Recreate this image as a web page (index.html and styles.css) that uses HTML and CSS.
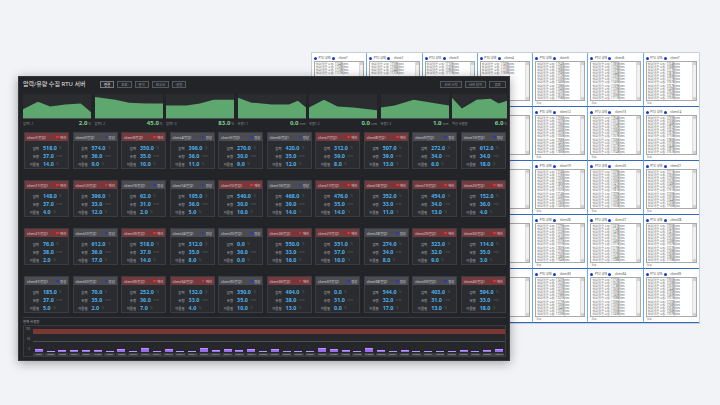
FILE: index.html
```html
<!DOCTYPE html>
<html lang="ko">
<head>
<meta charset="utf-8">
<title>압력/유량 수집 RTU 서버</title>
<link rel="stylesheet" href="styles.css">
</head>
<body>
<div class="desktop" id="desktop"></div>

<div class="app">
  <div class="topbar">
    <div class="title">압력/유량 수집 RTU 서버</div>
    <div class="btns">
      <span class="btn on">연결</span>
      <span class="btn">조회</span>
      <span class="btn">분석</span>
      <span class="btn">보고서</span>
      <span class="btn">설정</span>
    </div>
    <div class="btns right">
      <span class="btn">서버 시작</span>
      <span class="btn">서버 정지</span>
      <span class="btn wide">종료</span>
    </div>
  </div>

  <div class="charts">
    <div class="chart">
      <div class="plot"><svg viewBox="0 0 100 25" preserveAspectRatio="none"><polygon points="0,25 0,16 22,8 40,13 62,11 85,10 100,19 100,25"/></svg></div>
      <div class="clabel"><span class="cname">압력1-1</span><span class="cnum"><b class="cval">2.0</b><i class="cunit">%</i></span></div>
    </div>
    <div class="chart">
      <div class="plot"><svg viewBox="0 0 100 25" preserveAspectRatio="none"><polygon points="0,25 0,3 30,6 50,9 75,10 100,10 100,25"/></svg></div>
      <div class="clabel"><span class="cname">압력1-2</span><span class="cnum"><b class="cval">45.0</b><i class="cunit">%</i></span></div>
    </div>
    <div class="chart">
      <div class="plot"><svg viewBox="0 0 100 25" preserveAspectRatio="none"><polygon points="0,25 0,12 30,12 50,10 70,6 100,6 100,25"/></svg></div>
      <div class="clabel"><span class="cname">압력1-3</span><span class="cnum"><b class="cval">83.0</b><i class="cunit">%</i></span></div>
    </div>
    <div class="chart">
      <div class="plot"><svg viewBox="0 0 100 25" preserveAspectRatio="none"><polygon points="0,25 0,4 20,9 50,11 75,11 88,7 100,14 100,25"/></svg></div>
      <div class="clabel"><span class="cname">유량1-1</span><span class="cnum"><b class="cval">0.0</b><i class="cunit">ccm</i></span></div>
    </div>
    <div class="chart">
      <div class="plot"><svg viewBox="0 0 100 25" preserveAspectRatio="none"><polygon points="0,25 0,14 22,6 42,13 65,14 100,17 100,25"/></svg></div>
      <div class="clabel"><span class="cname">유량1-2</span><span class="cnum"><b class="cval">0.0</b><i class="cunit">ccm</i></span></div>
    </div>
    <div class="chart">
      <div class="plot"><svg viewBox="0 0 100 25" preserveAspectRatio="none"><polygon points="0,25 0,14 20,12 48,6 75,9 100,12 100,25"/></svg></div>
      <div class="clabel"><span class="cname">유량1-3</span><span class="cnum"><b class="cval">1.0</b><i class="cunit">ccm</i></span></div>
    </div>
    <div class="chart">
      <div class="plot"><svg viewBox="0 0 100 25" preserveAspectRatio="none"><polygon points="0,25 0,4 18,15 45,6 70,5 85,10 100,7 100,25"/></svg></div>
      <div class="clabel"><span class="cname">최신 사용량</span><span class="cnum"><b class="cval">6.0</b><i class="cunit">%</i></span></div>
    </div>
  </div>

  <div class="cards" id="cards"></div>

  <div class="usage">
    <div class="ulabel">현재 사용량</div>
    <div class="uchart">
      <div class="yaxis"><span>100</span><span>50</span><span>0</span></div>
      <div class="uplot">
        <div class="band"></div>
        <div class="midline"></div>
        <div class="bars" id="bars"></div>
      </div>
    </div>
  </div>
</div>
<script src="script.js"></script>
</body>
</html>
```

FILE: styles.css
```css
* { box-sizing: border-box; }
html, body { margin: 0; padding: 0; }
body {
  width: 720px;
  height: 405px;
  overflow: hidden;
  position: relative;
  background: #f2f3f6;
  font-family: "Noto Sans", "Noto Sans CJK KR", sans-serif;
}

/* background windows */
.desktop {
  position: absolute;
  left: 311px;
  top: 52px;
  width: 389px;
  height: 272px;
  display: grid;
  grid-template-columns: repeat(7, 1fr);
  grid-template-rows: repeat(5, 1fr);
  background: #ffffff;
  border: 1px solid #c7cfdb;
}
.win {
  display: flex;
  flex-direction: column;
  padding: 2px 2px 0 2px;
  border-right: 1px solid #6aaee8;
  border-bottom: 1px solid #3466bb;
  background: #fff;
  min-width: 0;
  min-height: 0;
}
.win:nth-child(7n) { border-right: none; }
/* windows lying fully under the server panel: their text cannot be seen */
.win.under .win-head,
.win.under .lines,
.win.under .win-foot { visibility: hidden; }
.win-head {
  height: 6px;
  display: flex;
  align-items: center;
  gap: 1.5px;
  font-size: 3px;
  line-height: 4px;
  color: #444;
  white-space: nowrap;
}
.win-head .name { margin-left: 2px; }
.wdot {
  width: 3px;
  height: 3px;
  border-radius: 50%;
  background: #1438d6;
  flex: none;
}
.listbox {
  flex: 1;
  display: flex;
  border: 1px solid #a8a8a8;
  min-height: 0;
  overflow: hidden;
}
.lines {
  flex: 1;
  padding: 0.5px 1px;
  font-size: 2.8px;
  line-height: 3.15px;
  color: #555;
  overflow: hidden;
  white-space: nowrap;
}
.scroll {
  width: 4px;
  background: #f1f1f1;
  border-left: 1px solid #dcdcdc;
  display: flex;
  flex-direction: column;
  justify-content: space-between;
}
.scroll i {
  display: block;
  height: 3px;
  background: #d2d2d2;
}
.win-foot {
  height: 5px;
  font-size: 2.8px;
  line-height: 5px;
  color: #888;
  padding-left: 1px;
}

/* dark app */
.app {
  position: absolute;
  left: 18px;
  top: 76px;
  width: 492px;
  height: 285px;
  background: #232428;
  border: 1px solid #36383c;
  padding: 3px 3px 3px 4px;
  display: flex;
  flex-direction: column;
  box-shadow: 0 2px 10px rgba(0, 0, 0, 0.35);
}
.topbar {
  height: 8px;
  display: flex;
  align-items: center;
}
.title {
  font-size: 6px;
  line-height: 8px;
  color: #e6e6e6;
  width: 77px;
  white-space: nowrap;
}
.btns {
  display: flex;
  gap: 3px;
}
.btns.right { margin-left: auto; }
.btn {
  height: 7px;
  padding: 0 3px;
  min-width: 14px;
  border: 1px solid #55585e;
  background: #27292c;
  color: #9a9da2;
  font-size: 3.4px;
  line-height: 5px;
  text-align: center;
  white-space: nowrap;
}
.btn.on { color: #ffffff; border-color: #777a80; }
.btn.wide { min-width: 17px; }

.charts {
  margin-top: 6px;
  display: grid;
  grid-template-columns: repeat(6, 68px) 55px;
  column-gap: 3.5px;
}
.chart { min-width: 0; }
.plot {
  height: 25px;
  background: #2a2c30;
  border-bottom: 1px solid #4a4d52;
}
.plot svg {
  display: block;
  width: 100%;
  height: 100%;
}
.plot polygon { fill: #5ea86f; }
.clabel {
  height: 7px;
  display: flex;
  justify-content: space-between;
  align-items: flex-end;
  white-space: nowrap;
}
.cname {
  font-size: 3.2px;
  line-height: 4px;
  color: #8d9096;
}
.cnum {
  display: flex;
  align-items: baseline;
  line-height: 6px;
}
.cval {
  font-size: 6px;
  line-height: 6px;
  color: #7ed08c;
  font-weight: bold;
}
.cunit {
  font-style: normal;
  font-size: 3.2px;
  line-height: 4px;
  color: #8d9096;
  margin-left: 1px;
}

.cards {
  margin-top: 6px;
  display: grid;
  grid-template-columns: repeat(10, 1fr);
  column-gap: 3.2px;
  row-gap: 11px;
  padding-left: 1px;
}
.card {
  height: 37px;
  background: #2a2c30;
  border: 1px solid #3b3d42;
  min-width: 0;
}
.card-head {
  height: 8px;
  display: flex;
  align-items: center;
  justify-content: space-between;
  padding: 0 2px;
  background: #4a4c52;
  color: #d8d8d8;
  font-size: 3.4px;
  line-height: 5px;
  white-space: nowrap;
}
.card.err .card-head { background: #74393d; }
.st {
  display: flex;
  align-items: center;
  gap: 1.2px;
}
.st::before {
  content: "";
  width: 2.6px;
  height: 2.6px;
  border-radius: 50%;
  background: #2a35d8;
}
.card.err .st::before { background: #ff2b2b; }
.card-body { padding-top: 3px; }
.crow {
  height: 8px;
  display: flex;
  align-items: center;
  white-space: nowrap;
}
.lab {
  width: 14px;
  text-align: right;
  font-size: 3.4px;
  line-height: 5px;
  color: #b8b9bd;
}
.val {
  margin-left: 4px;
  font-size: 5.4px;
  line-height: 7px;
  font-weight: bold;
  color: #4db0ea;
}
.unit {
  margin-left: 2.5px;
  font-size: 3px;
  line-height: 5px;
  color: #5d6066;
}

.usage {
  margin-top: 4px;
  border-top: 1px solid #3a3c41;
  padding-top: 1px;
  flex: 1;
  display: flex;
  flex-direction: column;
}
.ulabel {
  height: 6px;
  font-size: 3.4px;
  line-height: 6px;
  color: #a9abb0;
}
.uchart {
  flex: 1;
  display: flex;
  background: #25272a;
  border: 1px solid #3a3c41;
}
.yaxis {
  width: 6px;
  padding: 2px 0 5px 0;
  display: flex;
  flex-direction: column;
  justify-content: space-between;
  font-size: 2.6px;
  line-height: 3px;
  color: #9a9ca1;
  text-align: right;
}
.uplot {
  flex: 1;
  position: relative;
  display: flex;
  flex-direction: column;
  justify-content: flex-end;
  padding: 0 0 0 3px;
}
.band {
  position: absolute;
  left: 3px;
  right: 0;
  top: 3px;
  height: 4.5px;
  background: #7a3733;
}
.midline {
  position: absolute;
  left: 3px;
  right: 0;
  top: 15px;
  height: 1px;
  background: #4e5055;
}
.bars {
  display: flex;
  height: 30px;
  align-items: stretch;
}
.bcol {
  flex: 1;
  display: flex;
  flex-direction: column;
  align-items: center;
  justify-content: flex-end;
  min-width: 0;
}
.bar {
  width: 8px;
  background: #9b6cf0;
  border-top: 1px solid #b896ff;
}
.blab {
  margin-top: 0.5px;
  width: 11px;
  height: 3.5px;
  background: #3c3e44;
  font-size: 2px;
  line-height: 3.5px;
  color: #c8c8cc;
  text-align: center;
  overflow: hidden;
  white-space: nowrap;
}
```

FILE: script.js
```js
(function () {
  // background client windows (7 columns x 5 rows)
  var desk = document.getElementById('desktop');
  var html = '';
  var seed = 7;
  function rnd() { seed = (seed * 9301 + 49297) % 233280; return seed / 233280; }
  for (var i = 1; i <= 35; i++) {
    var row = Math.floor((i - 1) / 7);
    var col = (i - 1) % 7;
    var under = row >= 1 && col <= 3;
    // top-row windows on the left only show the first lines above the panel
    var count = (row === 0 && col <= 3) ? 4 : 12;
    var lines = '';
    for (var j = 0; j < 12; j++) {
      var n = 1700 + Math.floor(rnd() * 90);
      if (j < count) lines += '<div>압력/유량 수집: ' + n + 'Bytes</div>';
    }
    html += '<div class="win' + (under ? ' under' : '') + '">' +
      '<div class="win-head"><span class="wdot"></span><span>PTU 상태</span><span class="wdot"></span><span class="name">client' + i + '</span></div>' +
      '<div class="listbox"><div class="lines">' + lines + '</div><div class="scroll"><i></i><i></i></div></div>' +
      '<div class="win-foot">접속</div></div>';
  }
  desk.innerHTML = html;

  // client cards: [error?, pressure, flow, particle]
  var data = [
    [1,518,37,14],[0,574,36,9],[1,350,35,10],[0,396,36,11],[0,270,30,9],[0,420,35,12],[1,312,39,8],[1,507,39,13],[0,272,34,6],[0,612,34,18],
    [1,148,37,4],[1,396,33,12],[0,62,31,2],[0,195,36,5],[1,540,30,16],[0,468,39,14],[1,476,35,14],[1,352,33,11],[1,454,34,13],[1,152,36,4],
    [1,76,38,2],[0,612,36,17],[1,518,37,14],[0,312,35,8],[0,0,36,0],[1,550,33,16],[1,351,37,10],[0,274,34,8],[1,323,32,9],[1,114,35,3],
    [0,185,37,5],[0,70,35,2],[1,252,36,7],[1,132,33,4],[0,350,35,10],[1,494,38,13],[0,0,31,0],[0,544,32,17],[0,403,31,13],[1,594,33,18]
  ];
  var ch = '';
  data.forEach(function (d, k) {
    var err = d[0] === 1;
    ch += '<div class="card' + (err ? ' err' : '') + '">' +
      '<div class="card-head"><span>client' + (k + 1) + '(전압)</span><span class="st">' + (err ? '에러' : '정상') + '</span></div>' +
      '<div class="card-body">' +
      '<div class="crow"><span class="lab">압력</span><span class="val">' + d[1].toFixed(1) + '</span><span class="unit">%</span></div>' +
      '<div class="crow"><span class="lab">유량</span><span class="val">' + d[2].toFixed(1) + '</span><span class="unit">ccm</span></div>' +
      '<div class="crow"><span class="lab">이물질</span><span class="val">' + d[3].toFixed(1) + '</span><span class="unit">%</span></div>' +
      '</div></div>';
  });
  document.getElementById('cards').innerHTML = ch;

  // usage bars
  var usage = [14,6,7,8,7,10,6,11,6,17,3,11,0,4,18,8,11,7,12,4,13,5,1,1,15,12,8,1,16,8,2,7,4,6,2,5,7,4,9,12];
  var bh = '';
  usage.forEach(function (u, k) {
    bh += '<div class="bcol"><div class="bar" style="height:' + (u * 0.25).toFixed(2) + 'px"></div><div class="blab">Client' + (k + 1) + '</div></div>';
  });
  document.getElementById('bars').innerHTML = bh;
})();
```
